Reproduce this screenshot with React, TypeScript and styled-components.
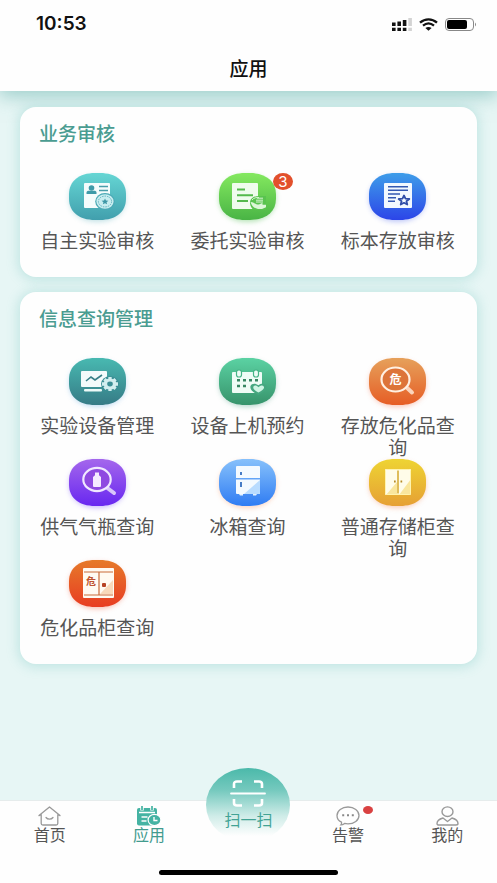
import React from "react";
import styled, { createGlobalStyle } from "styled-components";

const GlobalStyle = createGlobalStyle`
  * { box-sizing: border-box; }
  body {
    margin: 0;
    background: #e7f6f5;
    font-family: "Noto Sans CJK SC", "Liberation Sans", sans-serif;
    color: #555;
  }
  a { color: inherit; text-decoration: none; }
  button { font: inherit; color: inherit; background: none; border: 0; padding: 0; cursor: pointer; }
`;

const Screen = styled.div`
  min-height: 100vh;
  display: flex;
  flex-direction: column;
`;

const Header = styled.header`
  position: relative;
  background: #fefefe;
  box-shadow: 0 4px 18px 1px rgba(80, 165, 160, 0.5);
`;

const StatusBar = styled.div`
  height: 48px;
  padding: 0 20px 0 36px;
  display: flex;
  align-items: center;
  justify-content: space-between;
`;

const Clock = styled.time`
  font: 600 19px/24px Inter, "Liberation Sans", sans-serif;
  color: #111;
`;

const StatusIcons = styled.div`
  display: flex;
  align-items: center;
  gap: 7px;
`;

const PageTitle = styled.h1`
  margin: 0;
  padding: 8px 0 11px;
  font-size: 19px;
  line-height: 24px;
  font-weight: 500;
  text-align: center;
  color: #111;
`;

const Content = styled.main`
  flex: 1;
  display: flex;
  flex-direction: column;
  gap: 15px;
  padding: 16px 20px;
`;

const Card = styled.section`
  position: relative;
  background: #fefefe;
  border-radius: 16px;
  padding: 14px 4px 26px 2px;
  box-shadow: 0 1px 12px 2px rgba(90, 185, 180, 0.28);
`;

const CardTitle = styled.h2`
  margin: 0 17px 28px;
  font-size: 19px;
  line-height: 24px;
  font-weight: 500;
  color: #4a9c91;
`;

const AppGrid = styled.div`
  display: grid;
  grid-template-columns: repeat(3, 1fr);
  row-gap: 1px;
`;

const AppButton = styled.button`
  display: flex;
  flex-direction: column;
  align-items: center;
  gap: 9px;
  padding: 0 16px;
`;

const AppLabel = styled.span`
  font-size: 19px;
  line-height: 22px;
  text-align: center;
`;

const IconHolder = styled.span<{ $glow: string }>`
  position: relative;
  display: block;
  width: 57px;
  height: 47px;
  border-radius: 26px / 22px;
  box-shadow: 0 2px 5px ${(p) => p.$glow};
`;

const CountBadge = styled.span`
  position: absolute;
  left: 54px;
  top: 0;
  width: 20px;
  height: 17px;
  border-radius: 50%;
  background: #e2502c;
  color: #fff;
  font: 15px/17px Inter, "Liberation Sans", sans-serif;
  text-align: center;
`;

const TabBar = styled.nav`
  display: grid;
  grid-template-columns: repeat(5, 1fr);
  background: #fefefe;
  height: 70px;
  border-top: 1px solid #e6ecec;
`;

const Tab = styled.a<{ $active?: boolean }>`
  display: flex;
  flex-direction: column;
  align-items: center;
  padding-top: 5px;
  font-size: 16px;
  line-height: 16px;
  color: ${(p) => (p.$active ? "#429b8e" : "#555")};
`;

const TabIcon = styled.span`
  position: relative;
  display: block;
  height: 20px;
`;

const AlertDot = styled.span`
  position: absolute;
  left: 27px;
  top: 0;
  width: 10px;
  height: 8px;
  border-radius: 50%;
  background: #d94141;
`;

const ScanSlot = styled.div`
  position: relative;
  display: flex;
  justify-content: center;
`;

const ScanButton = styled.button`
  position: absolute;
  bottom: 28px;
  width: 84px;
  height: 74px;
  border-radius: 50%;
  display: flex;
  flex-direction: column;
  align-items: center;
  padding-top: 12px;
  gap: 2px;
  background: linear-gradient(#4bb9aa, #75c9be 30%, #cfece8 65%, #fefefe 92%);
  color: #42a395;
  font-size: 16px;
  line-height: 20px;
`;

const HomeArea = styled.footer`
  background: #fefefe;
  height: 13px;
  display: flex;
  justify-content: center;
`;

const HomeIndicator = styled.div`
  width: 36%;
  height: 5px;
  border-radius: 3px;
  background: #000;
`;

type Tone = { from: string; to: string; glow: string };

const tones: Record<string, Tone> = {
  teal: { from: "#65d6d4", to: "#419fad", glow: "rgba(70,165,180,.3)" },
  green: { from: "#84e95f", to: "#49b445", glow: "rgba(80,190,80,.4)" },
  blue: { from: "#3e9de9", to: "#2c45e8", glow: "rgba(50,80,235,.3)" },
  sea: { from: "#48b9b1", to: "#367b86", glow: "rgba(80,160,220,.35)" },
  mint: { from: "#5bd2a3", to: "#37936b", glow: "rgba(60,150,120,.35)" },
  orange: { from: "#e6a15b", to: "#e65d25", glow: "rgba(240,100,60,.35)" },
  purple: { from: "#a467ec", to: "#6827f0", glow: "rgba(110,70,250,.35)" },
  sky: { from: "#87c1fb", to: "#2f7cf3", glow: "rgba(250,150,100,.4)" },
  yellow: { from: "#eed433", to: "#e6a034", glow: "rgba(240,120,60,.35)" },
  red: { from: "#e67a2a", to: "#e83c22", glow: "rgba(235,80,50,.35)" },
};

const starPoints = (cx: number, cy: number, rx: number, ry: number) =>
  Array.from({ length: 10 }, (_, i) => {
    const k = i % 2 ? 0.46 : 1;
    const a = (Math.PI * i) / 5 - Math.PI / 2;
    return `${(cx + Math.cos(a) * rx * k).toFixed(2)},${(cy + Math.sin(a) * ry * k).toFixed(2)}`;
  }).join(" ");

const glyphs: Record<string, React.ReactNode> = {
  teal: (
    <>
      <rect x="15" y="10" width="26" height="25" rx="1" fill="#f4fcfc" />
      <circle cx="22.5" cy="15" r="2.8" fill="#3e9aa8" />
      <path d="M17.5 21v-1.2c0-1.4 1-2 2.4-2h5.2c1.4 0 2.4.6 2.4 2V21z" fill="#3e9aa8" />
      <path d="M30 13.5h9M30 17.5h9" stroke="#4a9eaa" strokeWidth="1.3" />
      <ellipse cx="36" cy="28.5" rx="9.8" ry="8.4" fill="#4aa9b5" />
      <ellipse cx="36" cy="28.5" rx="8.6" ry="7.3" fill="#c8edf0" />
      <ellipse cx="36" cy="28.5" rx="6.6" ry="5.4" fill="none" stroke="#4aa4b1" strokeDasharray="1.5 1" strokeWidth=".8" />
      <polygon points={starPoints(36, 28.7, 3.6, 3.2)} fill="#3e98a7" />
    </>
  ),
  green: (
    <>
      <path d="M14 10h24q1 0 1 1v24q0 1-1 1H14q-1 0-1-1V11q0-1 1-1z" fill="#effced" />
      <path d="M18 16.5h8M18 22.2h16M18 28h11" stroke="#54b94c" strokeWidth="2" />
      <path d="M31 30c0-5 4-7 9-7h7v14H35c-2-1-4-4-4-7z" fill="#59c34f" />
      <path d="M33 27c2-2.5 4.5-2.5 7-2.5M37 27.2h7M37 29h7M38 25.2h6" fill="none" stroke="#d7f5d1" strokeWidth="1" />
      <path d="M31.5 29c4 0 5 3 8.5 2.5l2.5-1.2c1.5-.3 1.7.7.7 1.5H47v2.4L43 36h-4c-4-.6-6.5-3.4-7.5-7z" fill="#dcf7d8" />
    </>
  ),
  blue: (
    <>
      <rect x="15" y="10" width="28" height="25" rx="1" fill="#f2f8ff" />
      <path d="M19 13.7h20M19 17.3h20M19 21h12M19 24.7h8M19 28.3h7" stroke="#3458b2" strokeWidth="1.4" />
      <polygon points={starPoints(35, 27.5, 5.6, 5)} fill="#f2f8ff" stroke="#304ea8" strokeWidth="1.8" strokeLinejoin="round" />
    </>
  ),
  sea: (
    <>
      <rect x="12" y="13" width="26" height="16" rx="1" fill="#f3fbfb" />
      <rect x="15" y="31" width="18" height="2.6" rx="1" fill="#edf9f8" />
      <path d="M17 23l5-4 4 3 7-5" fill="none" stroke="#377f87" strokeWidth="1.6" />
      <ellipse cx="41" cy="26" rx="9" ry="7.7" fill="#3b8f95" />
      <ellipse cx="41" cy="26" rx="6.4" ry="5.5" fill="#d2eeef" />
      <path d="M41 18.9v14.2M33 26h16M35.4 21.2l11.2 9.6M46.600 21.200L35.400 30.800" stroke="#d2eeef" strokeWidth="3.3" />
      <ellipse cx="41" cy="26" rx="2.8" ry="2.4" fill="#3b8f95" />
    </>
  ),
  mint: (
    <>
      <rect x="13" y="14" width="30" height="21" rx="1" fill="#effcf6" />
      <rect x="17.5" y="12" width="5" height="7" rx="2.2" fill="#effcf6" stroke="#47b487" strokeWidth="1.2" />
      <rect x="34.5" y="12" width="5" height="7" rx="2.2" fill="#effcf6" stroke="#47b487" strokeWidth="1.2" />
      <path d="M18 22.3h3M24 22.3h3M30 22.3h3M36 22.3h3M18 28h3M24 28h3" stroke="#378662" strokeWidth="2.5" />
      <path d="M39.5 37c-5-2.6-9-5-8-9 1.3-3 5-3 8-.8 3-2.2 7-1.8 8 .8 1 4-3.5 6.4-8 9z" fill="#46a780" />
      <path d="M39.5 34.5c-3.7-2-6-4-5-6 .9-1.6 3.2-1.3 5 .8 1.8-2.1 4.4-2.4 5.4-.6.8 2-1.8 4-5.4 5.8z" fill="#cff5e4" />
    </>
  ),
  orange: (
    <>
      <path d="M36 28l7 6.500" stroke="#fbd4bb" strokeWidth="4" strokeLinecap="round" />
      <ellipse cx="26.5" cy="21.5" rx="14" ry="12" fill="#dd7439" stroke="#fff0e2" strokeWidth="2.2" />
      <text x="26.5" y="26" textAnchor="middle" fontSize="12" fontWeight="700" fill="#fff">危</text>
    </>
  ),
  purple: (
    <>
      <path d="M37 28l8 6" stroke="#d9c6fa" strokeWidth="4" strokeLinecap="round" />
      <ellipse cx="28" cy="20.5" rx="13.7" ry="11.6" fill="#8f49e1" stroke="#f0e8ff" strokeWidth="2.2" />
      <path d="M26 13.5h4v2.8l2 1.6v9.2q0 1-1 1h-6q-1 0-1-1v-9.2l2-1.6z" fill="#f5eaff" />
    </>
  ),
  sky: (
    <>
      <path d="M17 8q0-1 1-1h22q1 0 1 1v11H17zM17 20.500h24V34q0 1-1 1H18q-1 0-1-1z" fill="#f4faff" />
      <path d="M41 21v13q0 1-1 1H25z" fill="#b9dcff" />
      <path d="M20 35h4v1.500h-3zM34 35h4l-1 1.500h-3z" fill="#e3f2ff" />
      <path d="M22 13v3M22 23v5" stroke="#356fc0" strokeWidth="1.8" />
    </>
  ),
  yellow: (
    <>
      <rect x="16" y="10" width="26" height="26" rx="1" fill="#fffce9" />
      <path d="M28 23v13H17zM42 20v16H30z" fill="#f9e69d" />
      <rect x="16.5" y="10.5" width="25" height="25" rx="1" fill="none" stroke="#fff4af" />
      <path d="M29 11.5v23" stroke="#d4a92d" strokeWidth="1.5" />
      <path d="M25 22.5h1.7M31.5 22.5h1.7" stroke="#b58a28" strokeWidth="2" />
    </>
  ),
  red: (
    <>
      <rect x="14" y="8" width="31" height="30" rx="1" fill="#fffaf2" />
      <path d="M44 20v14H31z" fill="#f8d9ba" />
      <path d="M15 12h29M15 35h29M30 12v23" stroke="#c96b39" strokeWidth="1.2" />
      <rect x="33" y="23" width="4" height="4" rx="1" fill="#b74325" />
      <text x="22" y="25" textAnchor="middle" fontSize="10" fontWeight="700" fill="#be532f">危</text>
    </>
  ),
};

function AppIcon({ tone, badge }: { tone: string; badge?: number }) {
  const t = tones[tone];
  return (
    <IconHolder $glow={t.glow}>
      <svg width="57" height="47" viewBox="0 0 57 47" aria-hidden="true">
        <defs>
          <linearGradient id={`tone-${tone}`} x1="0" y1="0" x2="0" y2="1">
            <stop stopColor={t.from} />
            <stop offset="1" stopColor={t.to} />
          </linearGradient>
        </defs>
        <path d="M26 0h5C47 0 57 8.500 57 21v5C57 38.500 47 47 31 47h-5C10 47 0 38.500 0 26v-5C0 8.500 10 0 26 0z" fill={`url(#tone-${tone})`} />
        {glyphs[tone]}
      </svg>
      {badge ? <CountBadge>{badge}</CountBadge> : null}
    </IconHolder>
  );
}

type Entry = { label: string; tone: string; badge?: number };

const groups: { title: string; items: Entry[] }[] = [
  {
    title: "业务审核",
    items: [
      { label: "自主实验审核", tone: "teal" },
      { label: "委托实验审核", tone: "green", badge: 3 },
      { label: "标本存放审核", tone: "blue" },
    ],
  },
  {
    title: "信息查询管理",
    items: [
      { label: "实验设备管理", tone: "sea" },
      { label: "设备上机预约", tone: "mint" },
      { label: "存放危化品查询", tone: "orange" },
      { label: "供气气瓶查询", tone: "purple" },
      { label: "冰箱查询", tone: "sky" },
      { label: "普通存储柜查询", tone: "yellow" },
      { label: "危化品柜查询", tone: "red" },
    ],
  },
];

const SignalIcon = () => (
  <svg width="20" height="13" viewBox="0 0 20 13" aria-hidden="true">
    <path d="M0 4.5h3.6V8H0zM5.4 3.5H9V8H5.4zM10.8 2h3.6v6h-3.6zM0 9.8h3.6V13H0zM5.4 9.8H9V13H5.4zM10.8 9.8h3.6V13h-3.6z" fill="#111" />
    <path d="M16.3 0h3.6v8h-3.6zM16.3 9.8h3.6V13h-3.6z" fill="#d3d3d3" />
  </svg>
);

const WifiIcon = () => (
  <svg width="19" height="13" viewBox="0 0 19 13" aria-hidden="true">
    <path d="M1 4.6C6 .2 13 .2 18 4.6M4 7.7c3.4-2.8 7.6-2.8 11 0" fill="none" stroke="#111" strokeWidth="2.3" />
    <path d="M6.4 10c2-1.5 4.2-1.5 6.2 0L9.5 12.8z" fill="#111" />
  </svg>
);

const BatteryIcon = () => (
  <svg width="32" height="13" viewBox="0 0 32 13" aria-hidden="true">
    <rect x=".5" y=".5" width="28" height="12" rx="3.5" fill="none" stroke="#888" />
    <rect x="2" y="2" width="20" height="9" rx="2" fill="#000" />
    <path d="M30 4.5q2 2 0 4z" fill="#888" />
  </svg>
);

const HomeIcon = () => (
  <svg width="23" height="20" viewBox="0 0 23 20" fill="none" stroke="#999" strokeWidth="1.3" strokeLinejoin="round" strokeLinecap="round" aria-hidden="true">
    <path d="M3.2 8.5L1 9.6 11.5 1 22 9.6l-2.2-1.1M3.2 8.8v8.7q0 1.5 1.7 1.5h13.2q1.7 0 1.7-1.5V8.8M8 11.5c1.7 2.2 5.3 2.2 7 0" />
  </svg>
);

const AppsIcon = () => (
  <svg width="24" height="20" viewBox="0 0 24 20" aria-hidden="true">
    <rect y="2" width="20" height="17.5" rx="2" fill="#45b3a3" />
    <path d="M5 0v4.5M15 0v4.5" stroke="#fefefe" strokeWidth="3.5" />
    <path d="M5 0v4M15 0v4" stroke="#45b3a3" strokeWidth="1.7" />
    <path d="M2 6.5h16M4.5 11h6M4.5 15h5" stroke="#fefefe" strokeWidth="1.3" />
    <ellipse cx="17.5" cy="14" rx="6.4" ry="5.6" fill="#45b3a3" stroke="#fefefe" strokeWidth="1.2" />
    <path d="M17 11v3.5h3.5" fill="none" stroke="#fefefe" strokeWidth="1.4" />
  </svg>
);

const ChatIcon = () => (
  <svg width="24" height="20" viewBox="0 0 24 20" aria-hidden="true">
    <path d="M5.5 16.2C2.6 14.8 1 12.2 1 9.4 1 4.6 5.9 1 12 1s11 3.6 11 8.4-4.9 8.4-11 8.4c-1.6 0-2.4-.1-3.4-.4-1.2 1-2.6 1.5-3.7 1.5.7-.8.9-1.5.6-2.7z" fill="none" stroke="#999" strokeWidth="1.3" />
    <path d="M6.2 9.3h2M11 9.3h2M15.8 9.3h2" stroke="#888" strokeWidth="1.9" />
  </svg>
);

const UserIcon = () => (
  <svg width="23" height="20" viewBox="0 0 23 20" fill="none" stroke="#999" strokeWidth="1.4" aria-hidden="true">
    <ellipse cx="11.5" cy="5.7" rx="5.5" ry="4.8" />
    <path d="M7 12l4.5 3.5L16 12c3.5 1 6 3 6 5.5q0 1.5-2 1.5H3q-2 0-2-1.5C1 15 3.500 13 7 12z" strokeLinejoin="round" />
  </svg>
);

const ScanIcon = () => (
  <svg width="36" height="27" viewBox="0 0 36 27" fill="none" stroke="#fff" strokeWidth="2.6" aria-hidden="true">
    <path d="M4 8V4q0-2.500 3-2.500h5M24 1.500h5q3 0 3 2.500v4M4 19v4q0 2.500 3 2.500h5M24 25.500h5q3 0 3-2.500v-4" />
    <path d="M1 13.500h34" strokeWidth="1.8" strokeLinecap="round" />
  </svg>
);

export default function App() {
  return (
    <>
      <GlobalStyle />
      <Screen>
        <Header>
          <StatusBar>
            <Clock>10:53</Clock>
            <StatusIcons>
              <SignalIcon />
              <WifiIcon />
              <BatteryIcon />
            </StatusIcons>
          </StatusBar>
          <PageTitle>应用</PageTitle>
        </Header>
        <Content>
          {groups.map((group) => (
            <Card key={group.title}>
              <CardTitle>{group.title}</CardTitle>
              <AppGrid>
                {group.items.map((item) => (
                  <AppButton key={item.label} type="button">
                    <AppIcon tone={item.tone} badge={item.badge} />
                    <AppLabel>{item.label}</AppLabel>
                  </AppButton>
                ))}
              </AppGrid>
            </Card>
          ))}
        </Content>
        <TabBar>
          <Tab href="#home">
            <TabIcon><HomeIcon /></TabIcon>
            首页
          </Tab>
          <Tab href="#apps" $active aria-current="page">
            <TabIcon><AppsIcon /></TabIcon>
            应用
          </Tab>
          <ScanSlot>
            <ScanButton type="button">
              <ScanIcon />
              扫一扫
            </ScanButton>
          </ScanSlot>
          <Tab href="#alerts">
            <TabIcon><ChatIcon /><AlertDot /></TabIcon>
            告警
          </Tab>
          <Tab href="#me">
            <TabIcon><UserIcon /></TabIcon>
            我的
          </Tab>
        </TabBar>
        <HomeArea>
          <HomeIndicator />
        </HomeArea>
      </Screen>
    </>
  );
}
